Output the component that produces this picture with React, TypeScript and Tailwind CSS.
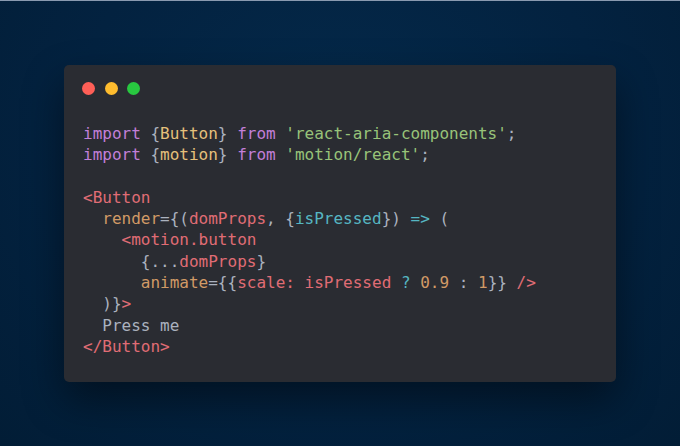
const C = {
  kw: 'text-[#c27fd9]',
  pun: 'text-[#abb2bf]',
  cls: 'text-[#e5c07b]',
  str: 'text-[#98c379]',
  tag: 'text-[#e06c75]',
  attr: 'text-[#d19a66]',
  cyan: 'text-[#56b6c2]',
  num: 'text-[#d19a66]',
};

type Tok = [string, string];

const lines: Tok[][] = [
  [
    ['import', C.kw], [' {', C.pun], ['Button', C.cls], ['} ', C.pun], ['from', C.kw], [' ', C.pun],
    ["'react-aria-components'", C.str], [';', C.pun],
  ],
  [
    ['import', C.kw], [' {', C.pun], ['motion', C.cls], ['} ', C.pun], ['from', C.kw], [' ', C.pun],
    ["'motion/react'", C.str], [';', C.pun],
  ],
  [],
  [['<Button', C.tag]],
  [
    ['  render', C.attr], ['={(', C.pun], ['domProps', C.tag], [', {', C.pun], ['isPressed', C.cyan],
    ['}) ', C.pun], ['=>', C.cyan], [' (', C.pun],
  ],
  [['    <motion.button', C.tag]],
  [['      {...', C.pun], ['domProps', C.tag], ['}', C.pun]],
  [
    ['      animate', C.attr], ['={{', C.pun], ['scale: isPressed', C.tag], [' ', C.pun], ['?', C.cyan],
    [' ', C.pun], ['0.9', C.num], [' : ', C.pun], ['1', C.num], ['}} ', C.pun], ['/>', C.tag],
  ],
  [['  )}', C.pun], ['>', C.tag]],
  [['  Press me', C.pun]],
  [['</Button>', C.tag]],
];

// window-style card holding the snippet
const CodeCard = () => (
  <div className="h-[317px] w-[552px] rounded-[5px] bg-[#2a2c32] pl-[19px] pt-[17px] shadow-[0_18px_40px_rgba(0,0,0,0.45)]">
    <div className="-ml-[1px] flex gap-[9.5px]">
      <span className="h-[13px] w-[13px] rounded-full bg-[#fe5f57]" />
      <span className="h-[13px] w-[13px] rounded-full bg-[#febc2e]" />
      <span className="h-[13px] w-[13px] rounded-full bg-[#28c840]" />
    </div>
    <pre className="mt-[28px] font-['DejaVu_Sans_Mono',monospace] text-[16px] leading-[21.3px]">
      {lines.map((line, i) => (
        <div key={i} className="h-[21.3px]">
          {line.map(([text, cls], j) => (
            <span key={j} className={cls}>
              {text}
            </span>
          ))}
        </div>
      ))}
    </pre>
  </div>
);

export default function App() {
  return (
    <div className="h-[446px] w-full border-t border-[#8a9ab0] bg-[radial-gradient(ellipse_at_50%_30%,#04294a_0%,#032240_55%,#021d36_100%)] pl-[64px] pt-[64px]">
      <CodeCard />
    </div>
  );
}
